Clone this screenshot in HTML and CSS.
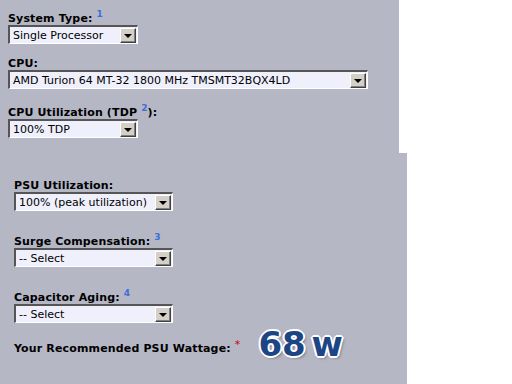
FILE: index.html
```html
<!DOCTYPE html>
<html lang="en">
<head>
    <meta charset="UTF-8">
    <title>PSU Calculator</title>
    <link rel="stylesheet" href="styles.css">
</head>
<body>
    <div class="panel panel-top">
        <div class="label">System Type: <sup class="note">1</sup></div>
        <div class="select w-small">
            <span class="value">Single Processor</span>
            <span class="btn"><span class="arrow"></span></span>
        </div>

        <div class="label gap-cpu">CPU:</div>
        <div class="select w-wide">
            <span class="value">AMD Turion 64 MT-32 1800 MHz TMSMT32BQX4LD</span>
            <span class="btn"><span class="arrow"></span></span>
        </div>

        <div class="label gap-tdp">CPU Utilization (TDP <sup class="note">2</sup>):</div>
        <div class="select w-small">
            <span class="value">100% TDP</span>
            <span class="btn"><span class="arrow"></span></span>
        </div>
    </div>

    <div class="panel panel-bottom">
        <div class="label">PSU Utilization:</div>
        <div class="select w-mid">
            <span class="value">100% (peak utilization)</span>
            <span class="btn"><span class="arrow"></span></span>
        </div>

        <div class="label gap">Surge Compensation: <sup class="note">3</sup></div>
        <div class="select w-mid">
            <span class="value">-- Select</span>
            <span class="btn"><span class="arrow"></span></span>
        </div>

        <div class="label gap">Capacitor Aging: <sup class="note">4</sup></div>
        <div class="select w-mid">
            <span class="value">-- Select</span>
            <span class="btn"><span class="arrow"></span></span>
        </div>

        <div class="result">
            <span class="label">Your Recommended PSU Wattage: <sup class="req">*</sup></span>
            <span class="watts">68 w</span>
        </div>
    </div>
</body>
</html>
```

FILE: styles.css
```css
body {
    margin: 0;
    background: #fff;
    font-family: "DejaVu Sans", Verdana, sans-serif;
    color: #000;
}
.panel {
    background: #b5b7c5;
    box-sizing: border-box;
}
.panel-top {
    width: 399px;
    height: 153px;
    padding: 13px 0 0 8px;
}
.panel-bottom {
    width: 407px;
    height: 231px;
    padding: 27px 0 0 14px;
}
.label {
    font-size: 11px;
    font-weight: bold;
    letter-spacing: 0.15px;
    line-height: 12px;
    height: 12px;
    white-space: nowrap;
}
.gap-cpu {
    margin-top: 14px;
}
.gap-tdp {
    margin-top: 18px;
}
.gap {
    margin-top: 25px;
}
.note {
    color: #3d6fd9;
    font-size: 9px;
    line-height: 0;
    vertical-align: 5px;
}
.req {
    color: #d40000;
    font-size: 11px;
    font-weight: normal;
    line-height: 0;
    vertical-align: 4px;
}
.select {
    display: flex;
    align-items: center;
    box-sizing: border-box;
    height: 19px;
    background: #eff0fc;
    border-top: 2px solid #555;
    border-left: 2px solid #555;
    border-right: 1px solid #fff;
    border-bottom: 1px solid #fff;
    padding: 1px 1px 1px 0;
}
.w-small {
    width: 130px;
}
.w-wide {
    width: 360px;
}
.w-mid {
    width: 159px;
}
.value {
    flex: 1;
    font-size: 11px;
    padding-left: 3px;
    white-space: nowrap;
    overflow: hidden;
}
.btn {
    display: flex;
    align-items: center;
    justify-content: center;
    box-sizing: border-box;
    width: 16px;
    height: 15px;
    background: #d4d0c8;
    border: 1px solid;
    border-color: #fff #404040 #404040 #fff;
    box-shadow: inset -1px -1px #808080;
}
.arrow {
    width: 0;
    height: 0;
    border-left: 4px solid transparent;
    border-right: 4px solid transparent;
    border-top: 4px solid #000;
    margin-top: 1px;
}
.result {
    margin-top: 2px;
    display: flex;
    align-items: baseline;
}
.watts {
    margin-left: 18px;
    font-size: 34px;
    font-weight: bold;
    color: #1c4586;
    word-spacing: -6px;
    line-height: 30px;
    position: relative;
    top: 4px;
    text-shadow: -2px 0 #fff, 2px 0 #fff, 0 -2px #fff, 0 2px #fff,
        -1px -1px #fff, 1px 1px #fff, -1px 1px #fff, 1px -1px #fff,
        2px 2px 3px rgba(0, 0, 0, 0.4);
}
```
